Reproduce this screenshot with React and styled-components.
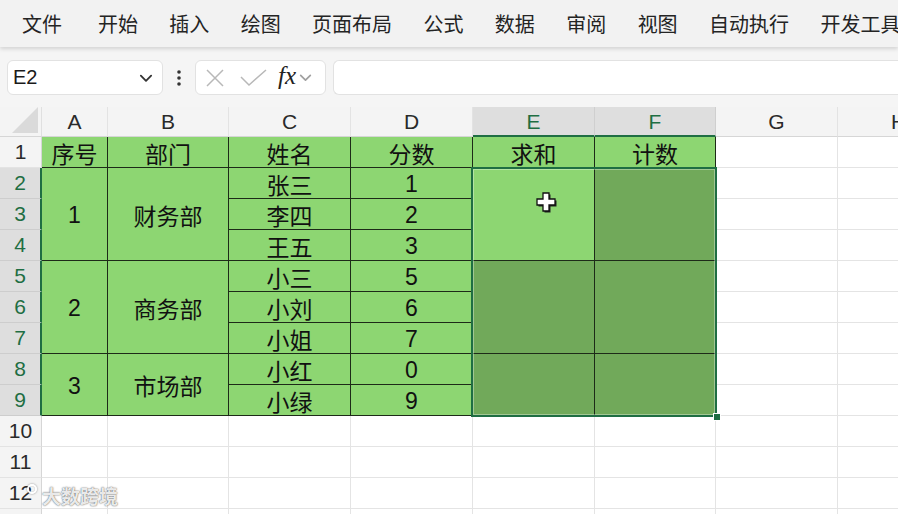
import React from "react";
import styled, { createGlobalStyle } from "styled-components";

const Global = createGlobalStyle`
  html, body { margin: 0; padding: 0; background: #ffffff; }
  body { width: 898px; height: 514px; overflow: hidden; font-family: "Noto Sans CJK SC", "Liberation Sans", sans-serif; }
  * { box-sizing: border-box; }
`;

const Page = styled.div`
  position: relative;
  width: 898px;
  height: 514px;
  overflow: hidden;
  background: #fff;
`;

const MenuBar = styled.div`
  position: relative;
  z-index: 2;
  height: 47px;
  background: #f2f2f2;
  box-shadow: 0 2px 4px rgba(0, 0, 0, 0.14);
  display: flex;
  align-items: center;
  gap: 31.4px;
  padding-left: 22px;
  white-space: nowrap;
`;

const MenuItem = styled.div`
  font-family: "Noto Sans CJK SC", sans-serif;
  font-size: 20px;
  color: #242424;
  margin-right: ${(p) => (p.$first ? "4.5px" : "0")};
`;

const Toolbar = styled.div`
  height: 60px;
  background: #f5f5f5;
  display: flex;
  align-items: flex-start;
  padding: 13px 0 0 7px;
`;

const Box = styled.div`
  height: 35px;
  background: #fff;
  border: 1px solid #e2e2e2;
  border-radius: 6px;
  display: flex;
  align-items: center;
`;

const NameBox = styled(Box)`
  width: 156px;
  padding: 0 8px 0 5px;
  justify-content: space-between;
  font-family: "Liberation Sans", sans-serif;
  font-size: 20px;
  color: #1a1a1a;
`;

const Dots = styled.div`
  width: 32px;
  height: 35px;
  display: flex;
  align-items: center;
  justify-content: center;
`;

const FxBox = styled(Box)`
  width: 131px;
  padding: 0 4px 0 9px;
`;

const FxText = styled.span`
  font-family: "Liberation Serif", "DejaVu Serif", serif;
  font-style: italic;
  font-size: 25px;
  color: #222;
  margin: -3px 2px 0 10px;
`;

const FormulaBox = styled(Box)`
  flex: 1;
  margin-left: 7px;
  border-right: none;
  border-radius: 6px 0 0 6px;
`;

const Grid = styled.div`
  display: grid;
  grid-template-columns: 42px 66px 121px 122px 122px 122px 121px 122px 122px;
  grid-template-rows: 30px repeat(13, 31px);
  position: relative;
`;

const Corner = styled.div`
  grid-column: 1;
  grid-row: 1;
  background: #f4f4f4;
  border-right: 1px solid #e0e0e0;
  border-bottom: 1px solid #d6d6d6;
  position: relative;
  &::after {
    content: "";
    position: absolute;
    right: 3px;
    bottom: 3px;
    width: 0;
    height: 0;
    border-left: 26px solid transparent;
    border-bottom: 26px solid #dadada;
  }
`;

const ColHead = styled.div`
  grid-column: ${(p) => p.$col};
  grid-row: 1;
  background: ${(p) => (p.$sel ? "#dedede" : "#f4f4f4")};
  color: ${(p) => (p.$sel ? "#1f6e43" : "#2a2a2a")};
  border-right: 1px solid ${(p) => (p.$sel ? "#cfcfcf" : "#e3e3e3")};
  border-bottom: ${(p) => (p.$sel ? "2px solid #1f6e43" : "1px solid #d6d6d6")};
  font-family: "Liberation Sans", sans-serif;
  font-size: 21px;
  display: flex;
  align-items: center;
  justify-content: center;
  padding-top: 1px;
`;

const RowHead = styled.div`
  grid-column: 1;
  grid-row: ${(p) => p.$row};
  background: ${(p) => (p.$sel ? "#dedede" : "#f4f4f4")};
  color: ${(p) => (p.$sel ? "#1f6e43" : "#2a2a2a")};
  border-right: ${(p) => (p.$sel ? "2px solid #1f6e43" : "1px solid #d6d6d6")};
  border-bottom: 1px solid ${(p) => (p.$sel ? "#cdcdcd" : "#e3e3e3")};
  font-family: "Liberation Sans", sans-serif;
  font-size: 21px;
  display: flex;
  align-items: center;
  justify-content: center;
`;

const Cell = styled.div`
  grid-column: ${(p) => p.$col};
  grid-row: ${(p) => p.$row} / span ${(p) => p.$span || 1};
  background: ${(p) => p.$bg || "#fff"};
  border-right: 1px solid ${(p) => (p.$bg ? "#1d2a18" : "#e4e4e4")};
  border-bottom: 1px solid ${(p) => (p.$bg ? "#1d2a18" : "#e4e4e4")};
  display: flex;
  align-items: center;
  justify-content: center;
  font-family: "Liberation Sans", "Noto Sans CJK SC", sans-serif;
  font-size: 23px;
  color: #111;
  position: relative;
  padding-top: ${(p) => (p.$num ? "3px" : "1px")};
`;

const Selection = styled.div`
  grid-column: 6 / span 2;
  grid-row: 3 / span 8;
  margin: -1px -1px -1px -2px;
  border: 2px solid #1f6e43;
  box-shadow: inset 0 0 0 1px rgba(255, 255, 255, 0.35);
  pointer-events: none;
  position: relative;
  z-index: 3;
`;

const Handle = styled.div`
  position: absolute;
  right: -6px;
  bottom: -6px;
  width: 8px;
  height: 8px;
  background: #1f6e43;
  border: 1px solid #fff;
`;

const Cursor = styled.svg`
  position: absolute;
  left: 61px;
  top: 22px;
`;

const Watermark = styled.div`
  position: absolute;
  left: 27px;
  top: 482px;
  display: flex;
  align-items: center;
  gap: 5px;
  font-family: "Noto Sans CJK SC", sans-serif;
  font-size: 19px;
  font-weight: bold;
  color: rgba(255, 255, 255, 0.9);
  text-shadow: 0 0 2px rgba(0, 0, 0, 0.45), 0 0 1px rgba(0, 0, 0, 0.5);
  z-index: 4;
`;

const WmCircle = styled.span`
  display: block;
  width: 10px;
  height: 10px;
  border-radius: 50%;
  border: 2px solid rgba(255, 255, 255, 0.95);
  box-shadow: 0 0 2px rgba(0, 0, 0, 0.5), inset 0 0 1px rgba(0, 0, 0, 0.4);
  align-self: flex-start;
  margin-top: 2px;
`;

const LIGHT = "#8dd672";
const DARK = "#71a95a";

const menus = ["文件", "开始", "插入", "绘图", "页面布局", "公式", "数据", "审阅", "视图", "自动执行", "开发工具"];
const letters = ["A", "B", "C", "D", "E", "F", "G", "H"];

const data = [
  [2, 2, 1, "序号", LIGHT],
  [3, 2, 1, "部门", LIGHT],
  [4, 2, 1, "姓名", LIGHT],
  [5, 2, 1, "分数", LIGHT],
  [6, 2, 1, "求和", LIGHT],
  [7, 2, 1, "计数", LIGHT],
  [2, 3, 3, "1", LIGHT],
  [3, 3, 3, "财务部", LIGHT],
  [4, 3, 1, "张三", LIGHT],
  [5, 3, 1, "1", LIGHT],
  [4, 4, 1, "李四", LIGHT],
  [5, 4, 1, "2", LIGHT],
  [4, 5, 1, "王五", LIGHT],
  [5, 5, 1, "3", LIGHT],
  [2, 6, 3, "2", LIGHT],
  [3, 6, 3, "商务部", LIGHT],
  [4, 6, 1, "小三", LIGHT],
  [5, 6, 1, "5", LIGHT],
  [4, 7, 1, "小刘", LIGHT],
  [5, 7, 1, "6", LIGHT],
  [4, 8, 1, "小姐", LIGHT],
  [5, 8, 1, "7", LIGHT],
  [2, 9, 2, "3", LIGHT],
  [3, 9, 2, "市场部", LIGHT],
  [4, 9, 1, "小红", LIGHT],
  [5, 9, 1, "0", LIGHT],
  [4, 10, 1, "小绿", LIGHT],
  [5, 10, 1, "9", LIGHT],
  [7, 3, 3, "", DARK],
  [6, 6, 3, "", DARK],
  [7, 6, 3, "", DARK],
  [6, 9, 2, "", DARK],
  [7, 9, 2, "", DARK],
];

function Chevron({ size = 14, color = "#444" }) {
  return (
    <svg width={size} height={size} viewBox="0 0 14 14">
      <path d="M2.5 5 L7 9.5 L11.5 5" fill="none" stroke={color} strokeWidth="1.6" strokeLinecap="round" strokeLinejoin="round" />
    </svg>
  );
}

export default function App() {
  const empties = [];
  for (let r = 2; r <= 14; r++) {
    for (let c = 2; c <= 9; c++) {
      const inData = c <= 7 && r <= 10;
      if (!inData) empties.push([c, r]);
    }
  }
  return (
    <Page>
      <Global />
      <MenuBar>
        {menus.map((m, i) => (
          <MenuItem key={m} $first={i === 0}>{m}</MenuItem>
        ))}
      </MenuBar>
      <Toolbar>
        <NameBox>
          <span>E2</span>
          <Chevron size={16} color="#333" />
        </NameBox>
        <Dots>
          <svg width="6" height="18" viewBox="0 0 6 18">
            <circle cx="3" cy="3" r="1.8" fill="#333" />
            <circle cx="3" cy="9" r="1.8" fill="#333" />
            <circle cx="3" cy="15" r="1.8" fill="#333" />
          </svg>
        </Dots>
        <FxBox>
          <svg width="20" height="20" viewBox="0 0 20 20">
            <path d="M2 2 L18 18 M18 2 L2 18" stroke="#b8b8b8" strokeWidth="1.5" fill="none" />
          </svg>
          <svg width="28" height="20" viewBox="0 0 28 20" style={{ marginLeft: 15 }}>
            <path d="M1 9 L9 17 L26 2" stroke="#b8b8b8" strokeWidth="1.5" fill="none" />
          </svg>
          <FxText>fx</FxText>
          <Chevron size={15} color="#a0a0a0" />
        </FxBox>
        <FormulaBox />
      </Toolbar>
      <Grid>
        <Corner />
        {letters.map((l, i) => (
          <ColHead key={l} $col={i + 2} $sel={l === "E" || l === "F"}>{l}</ColHead>
        ))}
        {Array.from({ length: 13 }, (_, i) => (
          <RowHead key={i} $row={i + 2} $sel={i + 1 >= 2 && i + 1 <= 9}>{i + 1}</RowHead>
        ))}
        {data.map(([c, r, s, t, bg]) => (
          <Cell key={`${c}-${r}`} $col={c} $row={r} $span={s} $bg={bg} $num={/^\d$/.test(t)}>{t}</Cell>
        ))}
        <Cell $col={6} $row={3} $span={3} $bg={LIGHT}>
          <Cursor width="24" height="24" viewBox="0 0 24 24">
            <path d="M9 3 H15 V9 H21 V15 H15 V21 H9 V15 H3 V9 H9 Z" fill="#222" transform="translate(1.5 1.5)" />
            <path d="M9 3 H15 V9 H21 V15 H15 V21 H9 V15 H3 V9 H9 Z" fill="#fff" stroke="#111" strokeWidth="1.3" />
          </Cursor>
        </Cell>
        {empties.map(([c, r]) => (
          <Cell key={`e-${c}-${r}`} $col={c} $row={r} />
        ))}
        <Selection>
          <Handle />
        </Selection>
      </Grid>
      <Watermark>
        <WmCircle />
        <span>大数跨境</span>
      </Watermark>
    </Page>
  );
}
